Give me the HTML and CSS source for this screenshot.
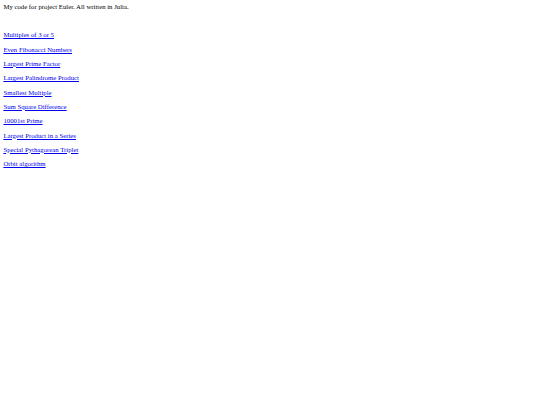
FILE: index.html
```html
<!DOCTYPE html>
<html>
<head>
<meta charset="utf-8">
<link rel="stylesheet" href="styles.css">
</head>
<body>
<p class="intro">My code for project Euler. All written in Julia.</p>
<nav class="links">
<a href="#">Multiples of 3 or 5</a>
<a href="#">Even Fibonacci Numbers</a>
<a href="#">Largest Prime Factor</a>
<a href="#">Largest Palindrome Product</a>
<a href="#">Smallest Multiple</a>
<a href="#">Sum Square Difference</a>
<a href="#">10001st Prime</a>
<a href="#">Largest Product in a Series</a>
<a href="#">Special Pythagorean Triplet</a>
<a href="#">Orbit algorithm</a>
</nav>
</body>
</html>
```
FILE: styles.css
```css
html, body {
  margin: 0;
  padding: 0;
  background: #fff;
}
body {
  font-family: "Liberation Serif", "Times New Roman", serif;
  font-size: 6.75px;
  line-height: 7.5px;
  color: #000;
  padding: 3.375px;
}
.intro {
  margin: 0 0 20.4px 0;
}
.links {
  display: flex;
  flex-direction: column;
  align-items: flex-start;
  gap: 6.83px;
}
.links a {
  color: #0000ee;
  text-decoration: underline;
}
```
